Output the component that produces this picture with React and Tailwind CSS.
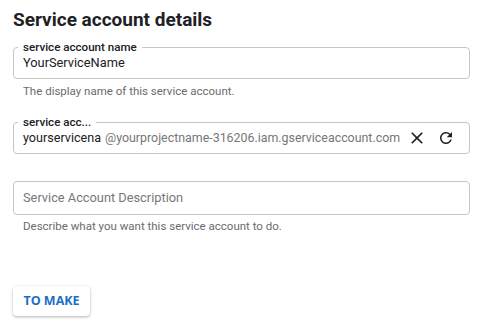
import { MdClose, MdRefresh } from "react-icons/md";

const Field = ({ label, children, className = "" }) => (
    <div className={`relative flex items-center border border-[#c6c6c6] rounded-[4px] pl-[9px] ${className}`}>
        {label && (
            <span className="absolute left-[4px] -top-[9px] bg-white px-[5px] text-[11.6px] leading-[16px] font-medium text-[#202124]">
                {label}
            </span>
        )}
        {children}
    </div>
);

export default function App() {
    return (
        <div className="w-[488px] h-[333px] bg-white px-[13px] pr-[18px] pt-[8px] font-['Roboto',sans-serif]">
            <h1 className="text-[19px] leading-[24px] font-bold text-[#202124]">Service account details</h1>

            {/* name */}
            <Field label="service account name" className="mt-[15px] h-[32px]">
                <span className="text-[12.8px] text-[#202124]">YourServiceName</span>
            </Field>
            <p className="mt-[4px] pl-[10px] text-[11.5px] leading-[16px] text-[#6b6b6b]">
                The display name of this service account.
            </p>

            {/* id */}
            <Field label="service acc..." className="mt-[23px] h-[32px] pr-[14px]">
                <span className="text-[12.6px] text-[#202124] whitespace-nowrap">yourservicena</span>
                <span className="ml-[4px] text-[12.4px] text-[#777] whitespace-nowrap">@yourprojectname-316206.iam.gserviceaccount.com</span>
                <div className="ml-auto flex items-center gap-[10px] text-[#202124]">
                    <MdClose size={20} />
                    <MdRefresh size={18} />
                </div>
            </Field>

            {/* description */}
            <Field className="mt-[27px] h-[34px]">
                <span className="text-[12.8px] text-[#777]">Service Account Description</span>
            </Field>
            <p className="mt-[3px] pl-[10px] text-[11.5px] leading-[16px] text-[#6b6b6b]">
                Describe what you want this service account to do.
            </p>

            <button className="mt-[52px] h-[30px] w-[77px] rounded-[4px] bg-white shadow-[0_1px_3px_rgba(0,0,0,0.3)] font-['Open_Sans',sans-serif] text-[12.5px] font-bold text-[#1a6fc4]">
                TO MAKE
            </button>
        </div>
    );
}
